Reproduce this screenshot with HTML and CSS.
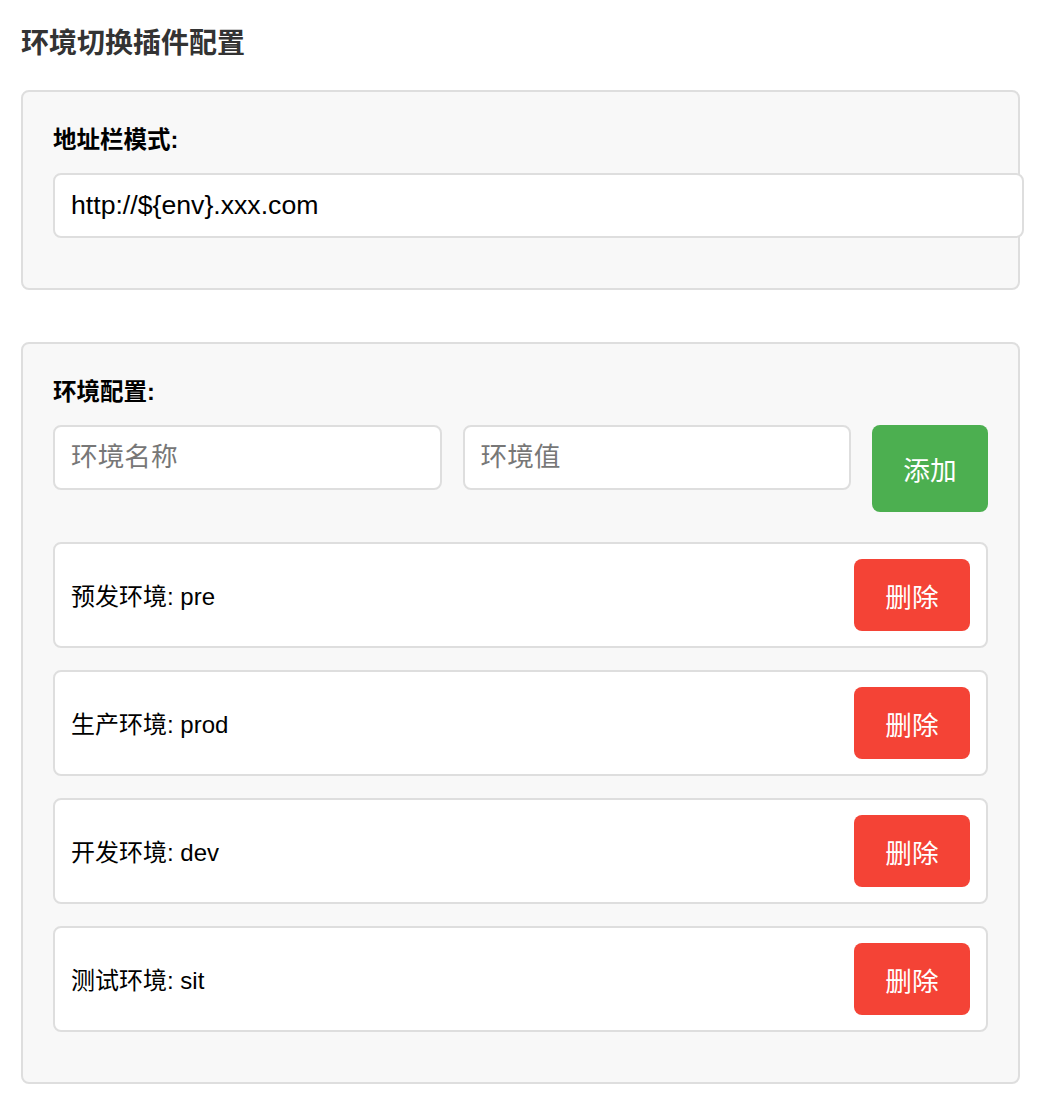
FILE: index.html
```html
<!DOCTYPE html>
<html lang="zh-CN">
<head>
<meta charset="utf-8">
<title>环境切换插件配置</title>
<link rel="stylesheet" href="styles.css">
</head>
<body>
<div class="page">
  <h1 class="title">环境切换插件配置</h1>

  <section class="card">
    <div class="label">地址栏模式:</div>
    <input class="field field-full" type="text" value="http://${env}.xxx.com">
  </section>

  <section class="card card-env">
    <div class="label">环境配置:</div>
    <div class="add-row">
      <input class="field field-flex" type="text" placeholder="环境名称">
      <input class="field field-flex" type="text" placeholder="环境值">
      <button class="btn btn-add">添加</button>
    </div>
    <ul class="env-list">
      <li class="env-item"><span class="env-text">预发环境: pre</span><button class="btn btn-del">删除</button></li>
      <li class="env-item"><span class="env-text">生产环境: prod</span><button class="btn btn-del">删除</button></li>
      <li class="env-item"><span class="env-text">开发环境: dev</span><button class="btn btn-del">删除</button></li>
      <li class="env-item"><span class="env-text">测试环境: sit</span><button class="btn btn-del">删除</button></li>
    </ul>
  </section>
</div>
</body>
</html>
```

FILE: styles.css
```css
html, body {
  margin: 0;
  padding: 0;
  background: #ffffff;
}

body {
  font-family: "Liberation Sans", "Noto Sans CJK SC", sans-serif;
  color: #000;
}

.page {
  padding: 28px 21px 20px 21px;
  width: 999px;
}

.title {
  margin: 0 0 30px 0;
  font-size: 28px;
  line-height: 32px;
  font-weight: bold;
  color: #333;
}

.card {
  background: #f8f8f8;
  border: 2px solid #dedede;
  border-radius: 8px;
  padding: 33px 30px 50px 30px;
  margin-bottom: 52px;
}

.label {
  font-size: 23.5px;
  line-height: 27px;
  font-weight: bold;
  padding-top: 2px;
  margin-bottom: 19px;
}

.field {
  font-family: "Liberation Sans", "Noto Sans CJK SC", sans-serif;
  font-size: 26.67px;
  color: #000;
  background: #fff;
  border: 2px solid #dedede;
  border-radius: 8px;
  padding: 0 16px;
  outline: none;
  margin: 0;
}

.field::placeholder {
  color: #777;
}

.field-full {
  display: block;
  box-sizing: content-box;
  width: 100%;
  height: 61px;
}

.add-row {
  display: flex;
  align-items: flex-start;
  gap: 21px;
}

.field-flex {
  flex: 1 1 0;
  min-width: 0;
  box-sizing: border-box;
  height: 65px;
}

.btn {
  font-family: "Liberation Sans", "Noto Sans CJK SC", sans-serif;
  font-size: 26.67px;
  color: #fff;
  border: none;
  border-radius: 8px;
  width: 116px;
  padding: 0;
  margin: 0;
  cursor: pointer;
}

.btn-add {
  background: #4caf50;
  height: 87px;
  flex: none;
}

.btn-del {
  background: #f44336;
  height: 72px;
  flex: none;
}

.env-list {
  list-style: none;
  margin: 30px 0 0 0;
  padding: 0;
  display: flex;
  flex-direction: column;
  gap: 22px;
}

.env-item {
  display: flex;
  align-items: center;
  justify-content: space-between;
  background: #fff;
  border: 2px solid #dedede;
  border-radius: 8px;
  padding: 15px 16px;
}

.env-text {
  font-size: 24px;
  line-height: 28px;
  padding-top: 4px;
}
```
